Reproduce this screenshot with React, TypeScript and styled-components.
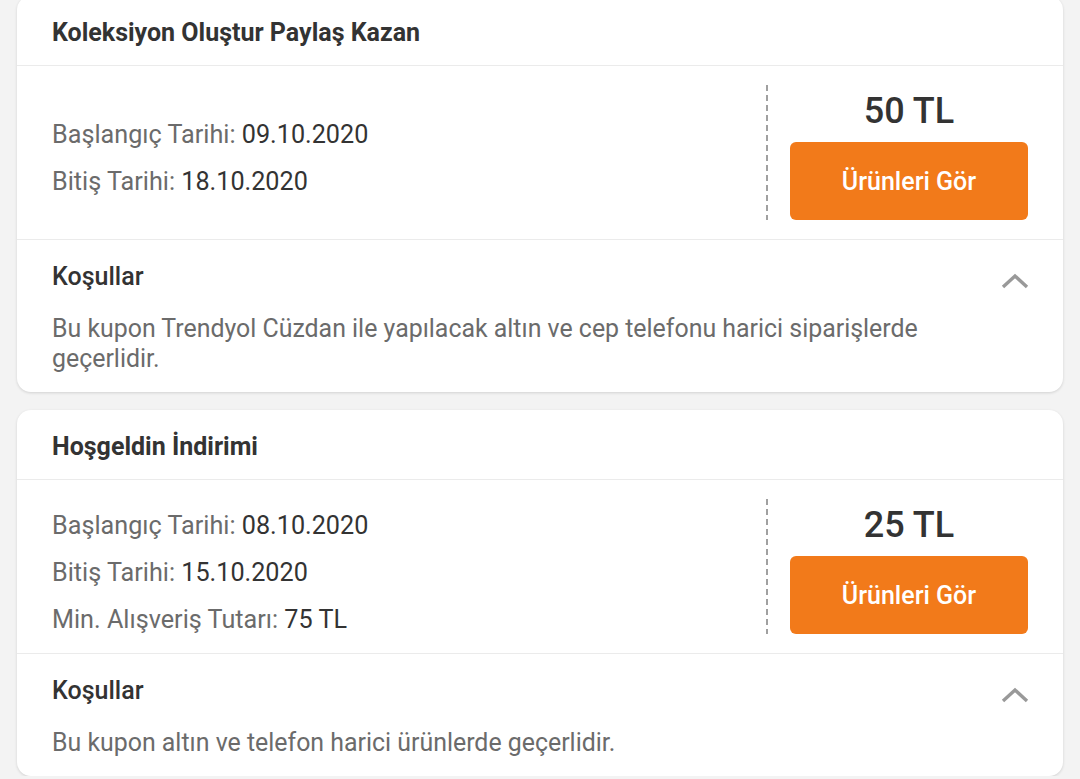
import React from 'react';
import styled, { createGlobalStyle } from 'styled-components';

const GlobalStyle = createGlobalStyle`
  html, body {
    margin: 0;
    padding: 0;
    background: #f3f3f3;
    font-family: Roboto, 'Noto Sans', Arial, sans-serif;
    overflow: hidden;
  }
`;

const Page = styled.div`
  display: flex;
  flex-direction: column;
  gap: 18px;
  padding: 0 17px;
  margin-top: -4px;
`;

const Card = styled.div`
  background: #fff;
  border-radius: 14px;
  box-shadow: 0 1px 3px rgba(0, 0, 0, 0.14);
  overflow: hidden;
`;

const CardHeader = styled.div`
  height: 70px;
  display: flex;
  align-items: center;
  padding: 3px 35px 0;
  border-bottom: 1px solid #ebebeb;
  box-sizing: border-box;
`;

const Title = styled.h2`
  margin: 0;
  font-size: 25px;
  font-weight: 700;
  color: #333;
`;

const Body = styled.div`
  height: 174px;
  box-sizing: border-box;
  padding: 19px 35px;
  display: flex;
  border-bottom: 1px solid #ebebeb;
`;

const Dates = styled.div`
  flex: 1;
  display: flex;
  flex-direction: column;
  justify-content: center;
  gap: 17px;
  padding-top: 12px;
`;

const Line = styled.div`
  font-size: 25.2px;
  line-height: 30px;
  color: #6b6b6b;
`;

const Value = styled.span`
  color: #333;
`;

const Separator = styled.div`
  width: 2px;
  margin-right: 22px;
  background: repeating-linear-gradient(to bottom, #a0a0a0 0 6px, transparent 6px 10px);
`;

const Reward = styled.div`
  width: 238px;
  display: flex;
  flex-direction: column;
  justify-content: flex-end;
`;

const Price = styled.div`
  text-align: center;
  font-size: 36px;
  font-weight: 500;
  line-height: 36px;
  color: #333;
  margin-bottom: 13px;
`;

const Button = styled.button`
  height: 78px;
  border: 0;
  border-radius: 6px;
  background: #f27a1a;
  color: #fff;
  font-family: inherit;
  font-size: 25px;
  font-weight: 500;
  cursor: pointer;
`;

const Terms = styled.div`
  padding: 22px 35px 18px;
`;

const TermsHead = styled.div`
  display: flex;
  justify-content: space-between;
  align-items: center;
`;

const TermsTitle = styled.div`
  font-size: 25px;
  font-weight: 500;
  line-height: 30px;
  color: #333;
`;

const Chevron = styled.svg`
  margin-top: 8px;
  margin-right: -1px;
`;

const TermsText = styled.p`
  margin: 22px 0 0;
  font-size: 24.9px;
  line-height: 30px;
  color: #6b6b6b;
`;

type Coupon = {
  title: string;
  price: string;
  lines: [string, string][];
  terms: string;
};

const coupons: Coupon[] = [
  {
    title: 'Koleksiyon Oluştur Paylaş Kazan',
    price: '50 TL',
    lines: [
      ['Başlangıç Tarihi: ', '09.10.2020'],
      ['Bitiş Tarihi: ', '18.10.2020'],
    ],
    terms:
      'Bu kupon Trendyol Cüzdan ile yapılacak altın ve cep telefonu harici siparişlerde geçerlidir.',
  },
  {
    title: 'Hoşgeldin İndirimi',
    price: '25 TL',
    lines: [
      ['Başlangıç Tarihi: ', '08.10.2020'],
      ['Bitiş Tarihi: ', '15.10.2020'],
      ['Min. Alışveriş Tutarı: ', '75 TL'],
    ],
    terms: 'Bu kupon altın ve telefon harici ürünlerde geçerlidir.',
  },
];

const CouponCard: React.FC<{ coupon: Coupon }> = ({ coupon }) => (
  <Card>
    <CardHeader>
      <Title>{coupon.title}</Title>
    </CardHeader>
    <Body>
      <Dates>
        {coupon.lines.map(([label, value]) => (
          <Line key={label}>
            {label}
            <Value>{value}</Value>
          </Line>
        ))}
      </Dates>
      <Separator />
      <Reward>
        <Price>{coupon.price}</Price>
        <Button>Ürünleri Gör</Button>
      </Reward>
    </Body>
    <Terms>
      <TermsHead>
        <TermsTitle>Koşullar</TermsTitle>
        <Chevron width='28' height='16' viewBox='0 0 28 16'>
          <polyline
            points='2,14 14,3 26,14'
            fill='none'
            stroke='#999'
            strokeWidth='3.4'
          />
        </Chevron>
      </TermsHead>
      <TermsText>{coupon.terms}</TermsText>
    </Terms>
  </Card>
);

export default function App() {
  return (
    <>
      <GlobalStyle />
      <Page>
        {coupons.map((c) => (
          <CouponCard key={c.title} coupon={c} />
        ))}
      </Page>
    </>
  );
}
